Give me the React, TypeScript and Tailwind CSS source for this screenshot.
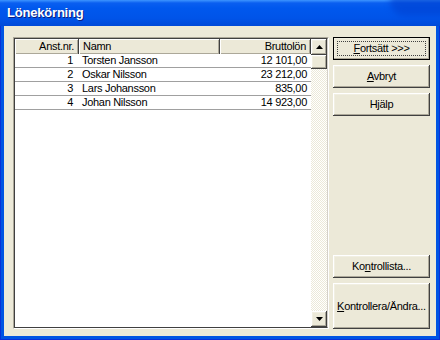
import React from 'react'

interface Employee {
  nr: number
  name: string
  salary: string
}

const employees: Employee[] = [
  { nr: 1, name: 'Torsten Jansson', salary: '12 101,00' },
  { nr: 2, name: 'Oskar Nilsson', salary: '23 212,00' },
  { nr: 3, name: 'Lars Johansson', salary: '835,00' },
  { nr: 4, name: 'Johan Nilsson', salary: '14 923,00' },
]

const raised =
  'bg-[#ece9d8] shadow-[inset_-1px_-1px_#404040,inset_1px_1px_#ffffff,inset_-2px_-2px_#aca899,inset_2px_2px_#f1efe2]'

const Btn = ({
  children,
  className = '',
  isDefault,
}: {
  children: React.ReactNode
  className?: string
  isDefault?: boolean
}) => (
  <div
    className={`relative flex items-center justify-center text-[11px] tracking-[-0.3px] text-black ${raised} ${
      isDefault ? 'outline outline-1 outline-black -outline-offset-1' : ''
    } ${className}`}
  >
    {isDefault && (
      <div className="absolute inset-[4px] border border-dotted border-[#404040]" />
    )}
    <span>{children}</span>
  </div>
)

const Arrow = ({ up }: { up?: boolean }) => (
  <div className={`flex h-[16px] w-[16px] items-center justify-center ${raised}`}>
    <svg width="7" height="4" viewBox="0 0 7 4">
      {up ? (
        <polygon points="0,4 7,4 3.5,0" fill="#000" />
      ) : (
        <polygon points="0,0 7,0 3.5,4" fill="#000" />
      )}
    </svg>
  </div>
)

const HeaderCell = ({
  children,
  className = '',
}: {
  children: React.ReactNode
  className?: string
}) => (
  <div
    className={`flex h-[15px] items-center border-r border-[#404040] bg-[#ece9d8] shadow-[inset_1px_1px_#ffffff,inset_-1px_-1px_#aca899] ${className}`}
  >
    {children}
  </div>
)

export default function App() {
  return (
    <div
      className="flex h-[340px] w-[440px] flex-col bg-[#0054e3] shadow-[inset_0_-1px_#0831d9,inset_1px_0_#0831d9,inset_-1px_0_#0831d9]"
      style={{ fontFamily: '"Liberation Sans", Arial, sans-serif' }}
    >
      <div className="relative flex h-[26px] shrink-0 items-center overflow-hidden bg-[linear-gradient(to_bottom,#3d95ff_0px,#0a5ff0_3px,#0058ee_8px,#0054e9_18px,#0049d8_26px)] pl-[7px]">
        <div className="absolute -right-[20px] -top-[14px] h-[30px] w-[70px] rounded-full bg-[#0040d0] opacity-60 blur-[3px]" />
        <span className="relative text-[13px] font-bold tracking-[-0.2px] text-white [text-shadow:1px_1px_#0a1e80]">
          Lönekörning
        </span>
      </div>
      <div className="mx-[4px] mb-[4px] flex flex-1 gap-[4px] bg-[#ece9d8] pb-[7px] pl-[9px] pr-[6px] pt-[11px]">
        <div className="flex w-[316px] border border-b-white border-l-[#aca899] border-r-white border-t-[#aca899]">
          <div className="flex flex-1 border border-[#404040] border-b-[#404040] border-r-[#d4d0c8] bg-white">
            <div className="flex flex-1 flex-col">
              <div className="flex text-[11px] tracking-[-0.3px] text-black">
                <HeaderCell className="w-[64px] justify-end pr-[4px]">Anst.nr.</HeaderCell>
                <HeaderCell className="w-[141px] pl-[4px]">Namn</HeaderCell>
                <HeaderCell className="flex-1 justify-end pr-[4px]">Bruttolön</HeaderCell>
              </div>
              {employees.map((e) => (
                <div
                  key={e.nr}
                  className="flex h-[14px] items-center border-b border-[#a0a0a0] text-[11px] tracking-[-0.3px] text-black"
                >
                  <div className="w-[64px] pr-[6px] text-right">{e.nr}</div>
                  <div className="w-[141px] pl-[3px]">{e.name}</div>
                  <div className="flex-1 pr-[4px] text-right">{e.salary}</div>
                </div>
              ))}
            </div>
            <div className="flex w-[16px] flex-col bg-[image:repeating-conic-gradient(#ffffff_0_25%,#ece9d8_0_50%)] bg-[length:2px_2px]">
              <Arrow up />
              <div className={`h-[14px] w-[16px] ${raised}`} />
              <div className="flex-1" />
              <Arrow />
            </div>
          </div>
        </div>
        <div className="flex flex-1 flex-col">
          <div className="flex flex-col gap-[5px]">
            <Btn isDefault className="h-[23px]">
              <u>F</u>ortsätt &gt;&gt;&gt;
            </Btn>
            <Btn className="h-[23px]">
              <u>A</u>vbryt
            </Btn>
            <Btn className="h-[23px]">Hjälp</Btn>
          </div>
          <div className="flex-1" />
          <div className="flex flex-col gap-[5px]">
            <Btn className="h-[23px]">
              Ko<u>n</u>trollista...
            </Btn>
            <Btn className="h-[46px]">
              <u>K</u>ontrollera/Ändra...
            </Btn>
          </div>
        </div>
      </div>
    </div>
  )
}
